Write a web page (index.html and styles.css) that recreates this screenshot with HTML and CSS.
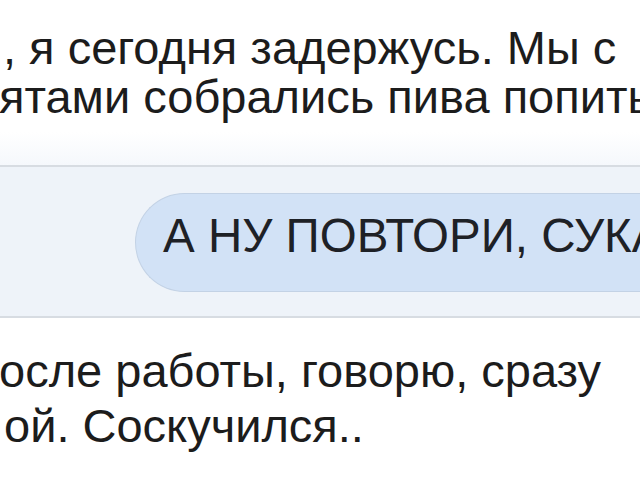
FILE: index.html
```html
<!DOCTYPE html>
<html lang="ru">
<head>
    <meta charset="UTF-8">
    <title>Переписка</title>
    <link rel="stylesheet" href="styles.css">
</head>
<body>
<div class="chat">
    <div class="message incoming top">
        <div class="line first">, я сегодня задержусь. Мы с</div>
        <div class="line second">ятами собрались пива попить</div>
    </div>

    <div class="reply-band">
        <div class="bubble">А НУ ПОВТОРИ, СУКА</div>
    </div>

    <div class="message incoming bottom">
        <div class="line">осле работы, говорю, сразу</div>
        <div class="line second">ой. Соскучился..</div>
    </div>
</div>
</body>
</html>
```

FILE: styles.css
```css
* { margin: 0; padding: 0; box-sizing: border-box; }
html, body { width: 640px; height: 480px; overflow: hidden; }
body {
    background: #ffffff;
    font-family: "Liberation Sans", Arial, sans-serif;
    color: #1c1c1c;
}
.chat { display: flex; flex-direction: column; width: 640px; }
.message { white-space: nowrap; overflow: hidden; font-size: 47px; }
.message.top {
    line-height: 49px;
    padding-top: 23px;
    height: 165px;
    background: linear-gradient(to bottom, #ffffff 80%, #f5f8fc);
}
.message.top .first { padding-left: 3px; }
.message.top .second { margin-left: -1px; }
.message.bottom {
    line-height: 55px;
    padding-top: 25px;
}
.message.bottom .line { margin-left: -1px; }
.message.bottom .second { margin-left: 4px; }

.reply-band {
    height: 153px;
    background: #eef3f9;
    border-top: 2px solid #d7dce2;
    border-bottom: 2px solid #d7dce2;
    padding-top: 26px;
    display: flex;
    overflow: hidden;
}
.bubble {
    margin-left: 135px;
    height: 99px;
    min-width: 560px;
    white-space: nowrap;
    background: #d2e2f6;
    border: 1px solid #c3d2e5;
    border-right: none;
    border-radius: 50px 0 0 50px;
    padding: 15px 0 0 27px;
    font-size: 47.5px;
    line-height: 54px;
    color: #1e2126;
}
```
